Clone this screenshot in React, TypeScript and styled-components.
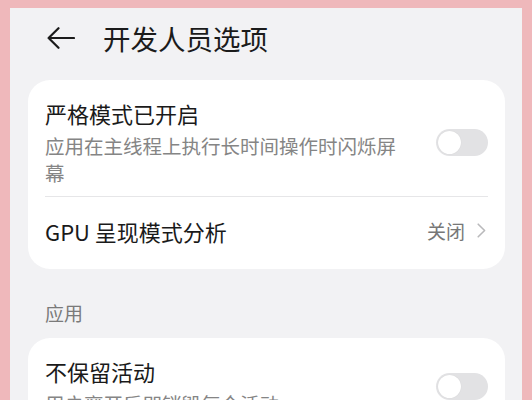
import styled, { createGlobalStyle } from 'styled-components';

const GlobalStyle = createGlobalStyle`
  html, body {
    margin: 0;
    padding: 0;
    background: #efb8bb;
    height: 100%;
    overflow: hidden;
  }
  #root {
    height: 100%;
  }
`;

const App = () => {
  return (
    <>
      <GlobalStyle />
      <Frame>
        <Screen>
          <Header>
            <BackButton aria-label='返回'>
              <svg width='28' height='22' viewBox='0 0 28 22' fill='none'>
                <path
                  d='M27 11H1.6M11.5 1.2L1.6 11l9.9 9.8'
                  stroke='#1b1b1b'
                  strokeWidth='2.2'
                  strokeLinecap='round'
                  strokeLinejoin='round'
                />
              </svg>
            </BackButton>
            <Title>开发人员选项</Title>
          </Header>

          <Card>
            <Row $tall>
              <RowText>
                <RowTitle>严格模式已开启</RowTitle>
                <RowSub>应用在主线程上执行长时间操作时闪烁屏幕</RowSub>
              </RowText>
              <Toggle />
            </Row>
            <Divider />
            <Row>
              <RowText>
                <RowTitle>GPU 呈现模式分析</RowTitle>
              </RowText>
              <RowValue>
                关闭
                <svg width='9' height='15' viewBox='0 0 9 15' fill='none'>
                  <path
                    d='M1.2 1.2L7.6 7.5 1.2 13.8'
                    stroke='#b9b9bb'
                    strokeWidth='1.6'
                    strokeLinecap='round'
                    strokeLinejoin='round'
                  />
                </svg>
              </RowValue>
            </Row>
          </Card>

          <SectionLabel>应用</SectionLabel>

          <Card>
            <Row $tall>
              <RowText>
                <RowTitle>不保留活动</RowTitle>
                <RowSub>用户离开后即销毁每个活动</RowSub>
              </RowText>
              <Toggle />
            </Row>
          </Card>
        </Screen>
      </Frame>
    </>
  );
};

export default App;

const Frame = styled.div`
  height: 100%;
  padding: 8px 10px 0 10px;
  box-sizing: border-box;
  font-family: 'Noto Sans CJK SC', 'Noto Sans', sans-serif;
`;

const Screen = styled.div`
  height: 100%;
  background: #f2f2f4;
  padding: 0 17px 0 18px;
  box-sizing: border-box;
  overflow: hidden;
`;

const Header = styled.div`
  display: flex;
  align-items: center;
  height: 60px;
  padding-left: 19px;
  margin-bottom: 12px;
  gap: 28px;
`;

const BackButton = styled.div`
  display: flex;
  align-items: center;
  width: 28px;
  height: 22px;
`;

const Title = styled.h1`
  margin: 0;
  font-size: 27.5px;
  font-weight: 400;
  color: #1b1b1b;
  line-height: 36px;
`;

const Card = styled.div`
  background: #ffffff;
  border-radius: 22px;
  padding: 0 17px;
`;

const Row = styled.div<{ $tall?: boolean }>`
  display: flex;
  align-items: center;
  justify-content: space-between;
  ${(p) =>
    p.$tall
      ? 'padding: 18px 0 10px;'
      : 'height: 72px; padding-bottom: 5px; box-sizing: border-box;'}
`;

const RowText = styled.div`
  display: flex;
  flex-direction: column;
  max-width: 360px;
`;

const RowTitle = styled.div`
  font-size: 22px;
  line-height: 30px;
  font-weight: 400;
  color: #1a1a1a;
`;

const RowSub = styled.div`
  margin-top: 4px;
  font-size: 19.5px;
  line-height: 27px;
  color: #858585;
`;

const RowValue = styled.div`
  display: flex;
  align-items: center;
  gap: 12px;
  font-size: 19px;
  color: #777777;
  padding-right: 2px;
`;

const Toggle = styled.div`
  position: relative;
  flex-shrink: 0;
  width: 52px;
  height: 27px;
  border-radius: 14px;
  background: #e2e2e4;
  &::after {
    content: '';
    position: absolute;
    left: 2px;
    top: 2px;
    width: 23px;
    height: 23px;
    border-radius: 50%;
    background: #ffffff;
    box-shadow: 0 0 1px rgba(0, 0, 0, 0.12);
  }
`;

const Divider = styled.div`
  height: 1px;
  background: #e6e6e8;
`;

const SectionLabel = styled.div`
  padding: 30px 0 12px 17px;
  font-size: 19px;
  line-height: 27px;
  color: #7a7a7a;
`;
